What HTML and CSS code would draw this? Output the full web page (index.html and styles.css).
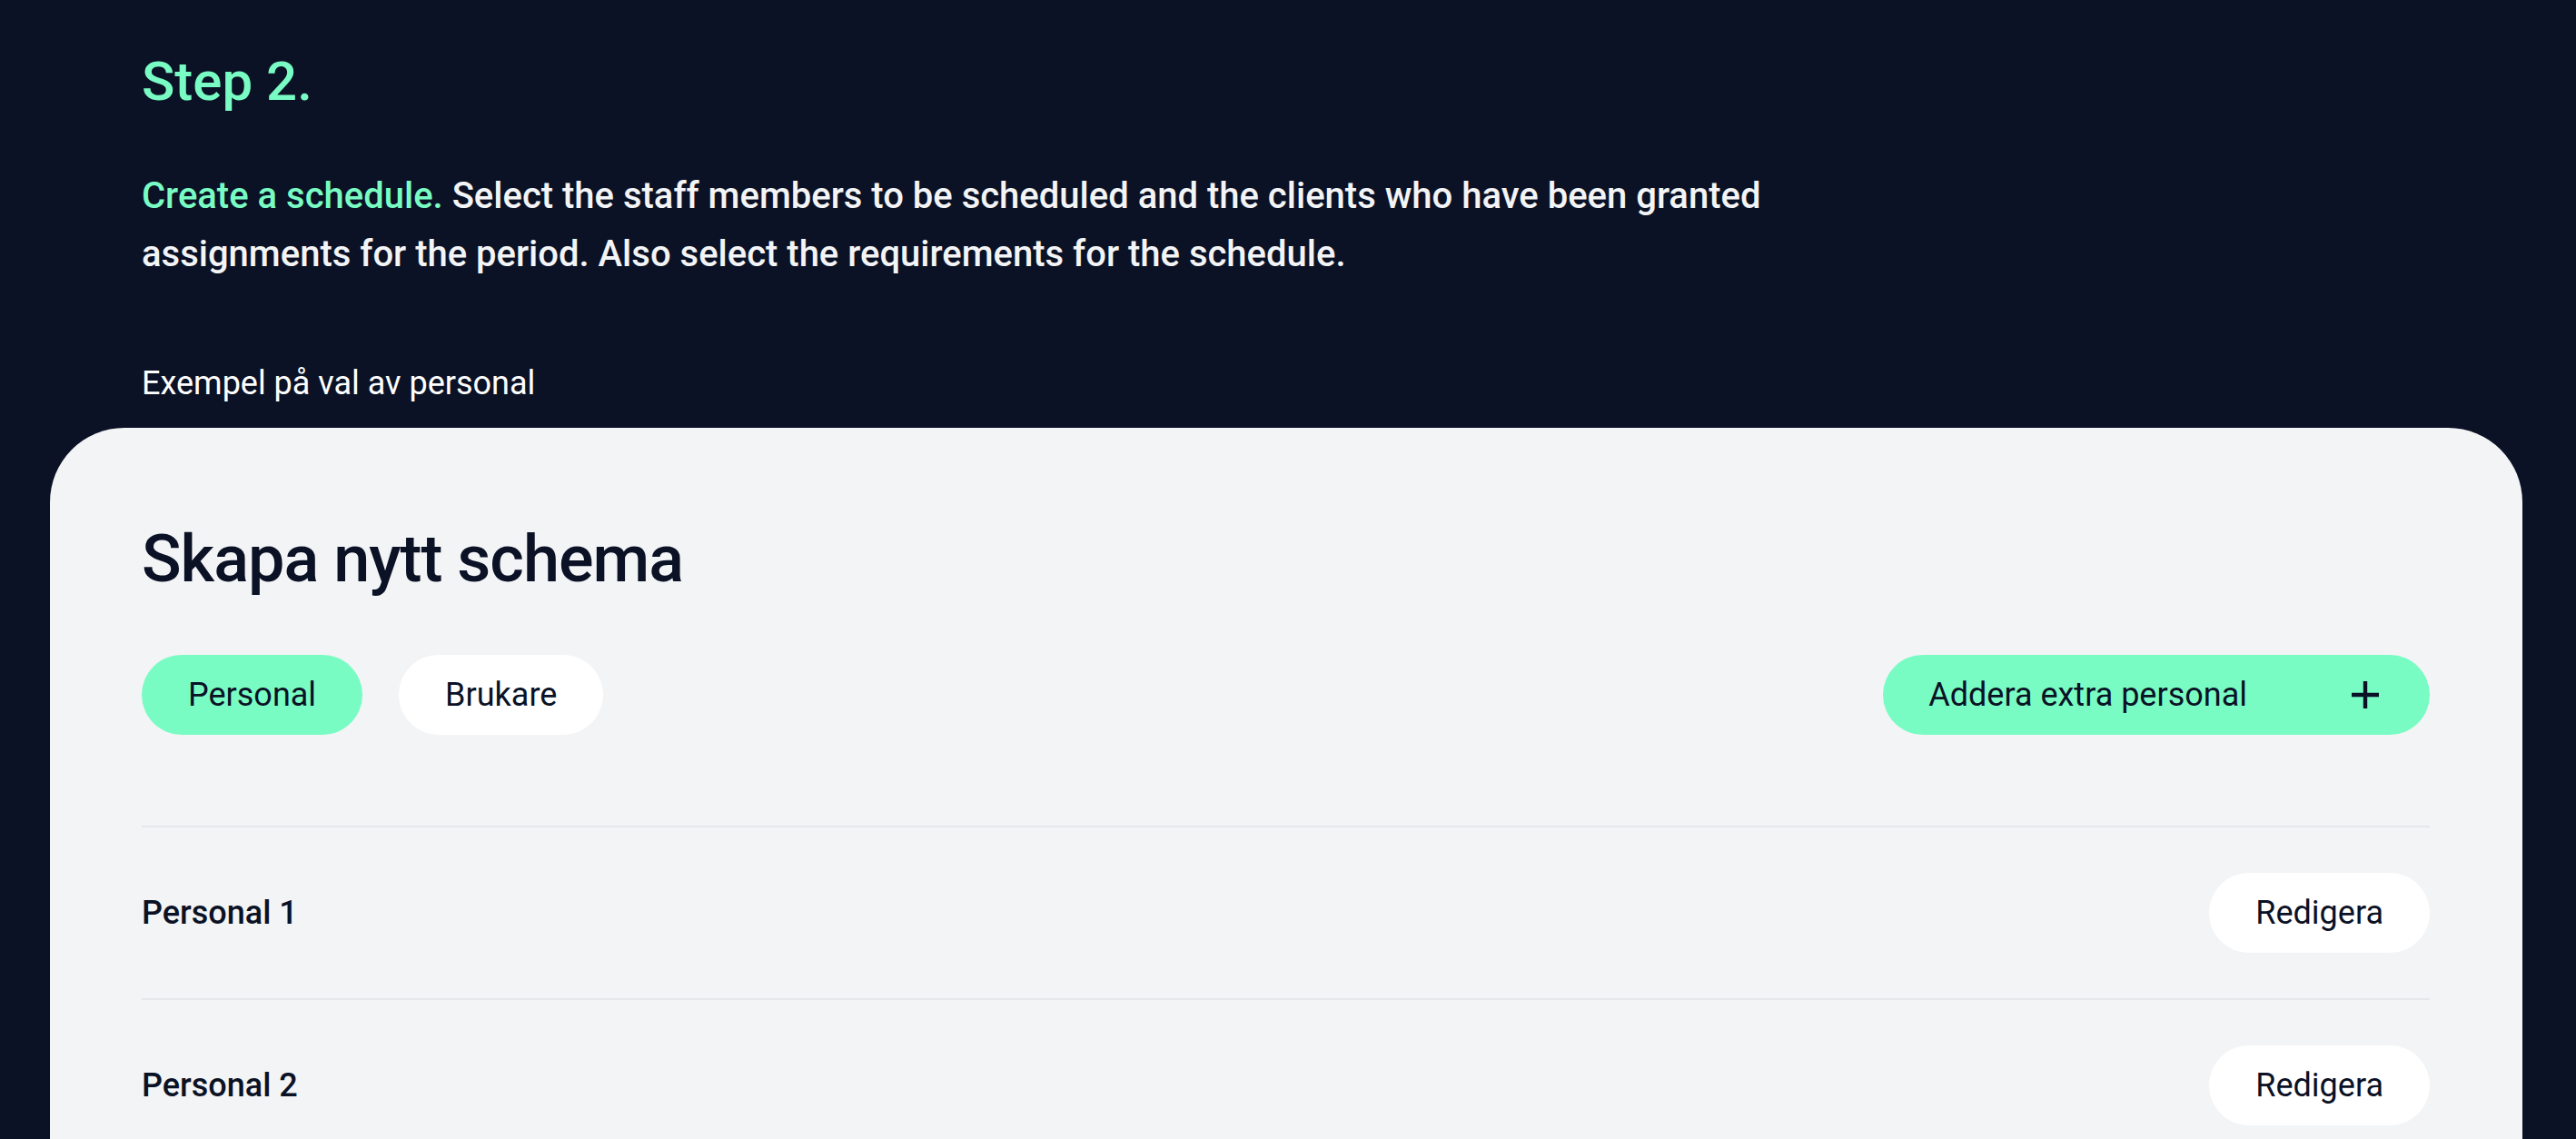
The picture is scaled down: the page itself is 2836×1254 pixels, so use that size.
FILE: index.html
```html
<!DOCTYPE html>
<html lang="sv">
<head>
<meta charset="utf-8">
<title>Step 2</title>
<link rel="stylesheet" href="styles.css">
</head>
<body>
<div class="page">
  <section class="intro">
    <h2 class="step">Step 2.</h2>
    <p class="lead"><span class="accent">Create a schedule.</span> Select the staff members to be scheduled and the clients who have been granted assignments for the period. Also select the requirements for the schedule.</p>
    <p class="caption">Exempel på val av personal</p>
  </section>
  <section class="card">
    <h1 class="card-title">Skapa nytt schema</h1>
    <div class="toolbar">
      <div class="tabs">
        <button class="pill pill-green">Personal</button>
        <button class="pill pill-white">Brukare</button>
      </div>
      <button class="pill pill-green add-btn">
        <span>Addera extra personal</span>
        <svg class="plus" width="30" height="30" viewBox="0 0 30 30" aria-hidden="true">
          <path d="M15 0V30M0 15H30" stroke="#0b1226" stroke-width="4.4" fill="none"/>
        </svg>
      </button>
    </div>
    <ul class="rows">
      <li class="row"><span class="row-label">Personal 1</span><button class="pill pill-white">Redigera</button></li>
      <li class="row"><span class="row-label">Personal 2</span><button class="pill pill-white">Redigera</button></li>
      <li class="row"><span class="row-label">Personal 3</span><button class="pill pill-white">Redigera</button></li>
    </ul>
  </section>
</div>
</body>
</html>
```

FILE: styles.css
```css
* { box-sizing: border-box; }

html, body {
  margin: 0;
  padding: 0;
  background: #0b1226;
  font-family: Roboto, "Noto Sans", "Liberation Sans", sans-serif;
  color: #0b1226;
}

.page {
  padding: 0 59px 0 55px;
}

.intro {
  padding: 54px 0 0 101px;
}

.step {
  margin: 0;
  font-size: 60px;
  line-height: 72px;
  font-weight: 500;
  color: #79fcc3;
}

.lead {
  margin: 58px 0 0;
  max-width: 1800px;
  font-size: 40px;
  line-height: 64px;
  font-weight: 500;
  color: #f3f4f6;
}

.accent {
  color: #79fcc3;
}

.caption {
  margin: 86px 0 0;
  font-size: 36px;
  line-height: 48px;
  font-weight: 400;
  color: #ffffff;
}

.card {
  margin-top: 25px;
  background: #f3f4f6;
  border-radius: 82px 82px 0 0;
  padding: 102px 102px 100px 101px;
}

.card-title {
  margin: 0;
  font-size: 72px;
  line-height: 86px;
  font-weight: 500;
  letter-spacing: -1px;
  color: #0b1226;
}

.toolbar {
  margin-top: 62px;
  display: flex;
  justify-content: space-between;
  align-items: center;
}

.tabs {
  display: flex;
  gap: 40px;
}

.pill {
  display: inline-flex;
  align-items: center;
  height: 88px;
  padding: 0 51px;
  border: none;
  border-radius: 44px;
  font-family: inherit;
  font-size: 36px;
  font-weight: 400;
  color: #0b1226;
  cursor: pointer;
}

.pill-green { background: #79fcc3; }
.pill-white { background: #ffffff; }

.add-btn {
  padding: 0 56px 0 50px;
  gap: 115px;
}

.plus { display: block; }

.rows {
  list-style: none;
  margin: 100px 0 0;
  padding: 0;
}

.row {
  display: flex;
  justify-content: space-between;
  align-items: center;
  border-top: 2px solid #e5e7eb;
  padding: 50px 0;
}

.row-label {
  font-size: 36px;
  font-weight: 500;
  color: #0b1226;
}
```
